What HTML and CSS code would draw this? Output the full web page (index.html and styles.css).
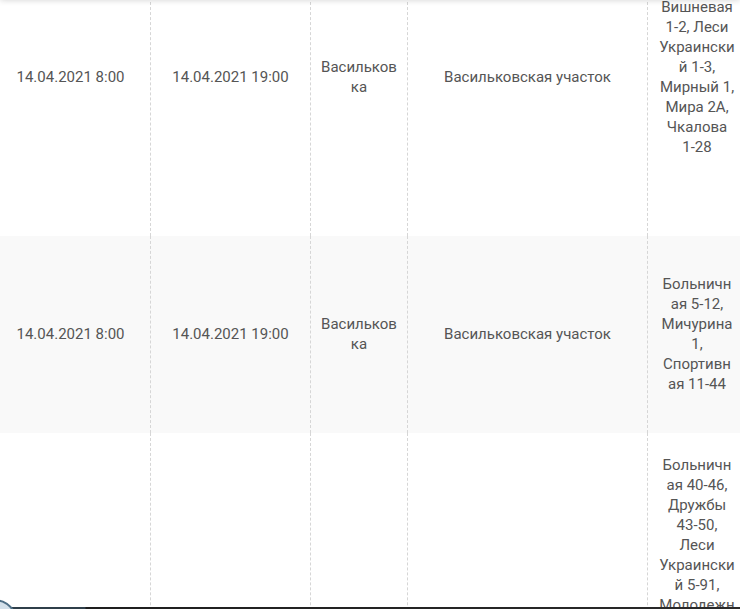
FILE: index.html
```html
<!DOCTYPE html>
<html lang="ru">
<head>
<meta charset="utf-8">
<title>Отключения</title>
<link rel="stylesheet" href="styles.css">
</head>
<body>
<div class="top-shadow"></div>
<table class="schedule">
  <colgroup>
    <col class="c-start">
    <col class="c-end">
    <col class="c-town">
    <col class="c-area">
    <col class="c-streets">
  </colgroup>
  <tbody>
    <tr class="row-first">
      <td>14.04.2021 8:00</td>
      <td>14.04.2021 19:00</td>
      <td>Васильковка</td>
      <td>Васильковская участок</td>
      <td class="streets">Вишневая 1-2, Леси Украинский 1-3, Мирный 1, Мира 2А, Чкалова 1-28</td>
    </tr>
    <tr class="row-alt">
      <td>14.04.2021 8:00</td>
      <td>14.04.2021 19:00</td>
      <td>Васильковка</td>
      <td>Васильковская участок</td>
      <td class="streets">Больничная 5-12, Мичурина 1, Спортивная 11-44</td>
    </tr>
    <tr class="row-last">
      <td></td>
      <td></td>
      <td></td>
      <td></td>
      <td class="streets">Больничная 40-46, Дружбы 43-50, Леси Украинский 5-91, Молодежная</td>
    </tr>
  </tbody>
</table>
<div class="bottom-bar"></div>
<div class="bottom-badge"></div>
</body>
</html>
```

FILE: styles.css
```css
html, body {
  margin: 0;
  padding: 0;
  background: #fff;
  overflow: hidden;
  height: 609px;
}

body {
  font-family: Roboto, "Noto Sans", sans-serif;
  font-size: 15px;
  line-height: 20px;
  color: #555;
}

.top-shadow {
  position: fixed;
  left: 0;
  right: 0;
  top: -10px;
  height: 10px;
  box-shadow: 0 0 6px rgba(0, 0, 0, 0.18);
  z-index: 2;
}

.schedule {
  table-layout: fixed;
  border-collapse: separate;
  border-spacing: 0;
  width: 756px;
  margin: -3px 0 0 -10px;
}

.c-start { width: 160px; }
.c-end { width: 160px; }
.c-town { width: 97px; }
.c-area { width: 240px; }
.c-streets { width: 99px; }

.schedule td {
  box-sizing: border-box;
  border-left: 1px dashed #d6d6d6;
  padding: 0 10px;
  text-align: center;
  vertical-align: middle;
  overflow-wrap: break-word;
  word-wrap: break-word;
}

.schedule td.streets {
  padding-left: 11px;
  padding-right: 11px;
}

.row-first td {
  padding-top: 0;
  padding-bottom: 79px;
}

.row-alt td {
  background: #f9f9f9;
  padding-top: 38px;
  padding-bottom: 39px;
}

.row-last td {
  padding-top: 22px;
  padding-bottom: 40px;
  vertical-align: top;
}

.bottom-bar {
  position: fixed;
  left: 0;
  right: 0;
  bottom: 0;
  height: 2px;
  background: linear-gradient(to right, #2f3f4a 0, #2f3f4a 85px, #1e1e1e 86px, #2a2a2a 100%);
  z-index: 3;
}

.bottom-badge {
  position: fixed;
  left: -30px;
  bottom: -38px;
  width: 44px;
  height: 44px;
  border-radius: 50%;
  background: #d3e0ea;
  border: 2px solid #4f6f86;
  z-index: 4;
}
```
